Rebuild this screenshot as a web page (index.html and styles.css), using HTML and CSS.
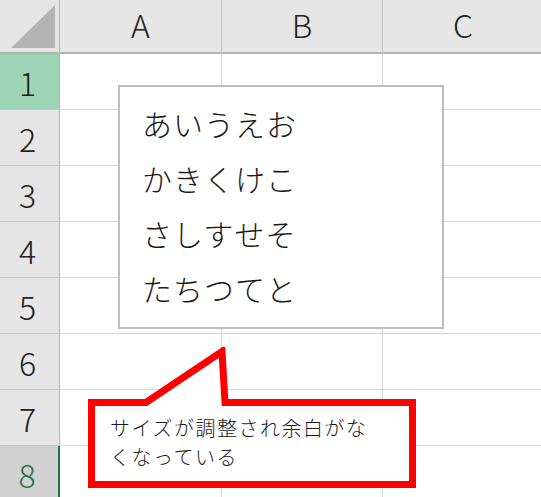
FILE: index.html
```html
<!DOCTYPE html>
<html lang="ja">
<head>
<meta charset="utf-8">
<title>Sheet</title>
<link rel="stylesheet" href="styles.css">
</head>
<body>
<div class="sheet">
  <div class="grid">
    <div class="corner"><svg class="corner-tri" width="44" height="43" viewBox="0 0 44 43"><polygon points="44,0 44,43 0,43" fill="#b4b4b4"/></svg></div>
    <div class="colhead">A</div>
    <div class="colhead">B</div>
    <div class="colhead">C</div>

    <div class="rowhead sel">1</div><div class="cell"></div><div class="cell"></div><div class="cell"></div>
    <div class="rowhead">2</div><div class="cell"></div><div class="cell"></div><div class="cell"></div>
    <div class="rowhead">3</div><div class="cell"></div><div class="cell"></div><div class="cell"></div>
    <div class="rowhead">4</div><div class="cell"></div><div class="cell"></div><div class="cell"></div>
    <div class="rowhead">5</div><div class="cell"></div><div class="cell"></div><div class="cell"></div>
    <div class="rowhead">6</div><div class="cell"></div><div class="cell"></div><div class="cell"></div>
    <div class="rowhead">7</div><div class="cell"></div><div class="cell"></div><div class="cell"></div>
    <div class="rowhead active">8</div><div class="cell"></div><div class="cell"></div><div class="cell"></div>
  </div>

  <div class="textbox">
    <div class="tb-line">あいうえお</div>
    <div class="tb-line">かきくけこ</div>
    <div class="tb-line">さしすせそ</div>
    <div class="tb-line">たちつてと</div>
  </div>

  <div class="callout">
    <svg class="callout-shape" width="328" height="141" viewBox="0 0 328 141">
      <path d="M3.5,55.5 H58 L134,4.5 L137,55.5 H324.5 V137.5 H3.5 Z" fill="#ffffff" stroke="#ff0000" stroke-width="7" stroke-linejoin="miter" stroke-miterlimit="10"/>
    </svg>
    <div class="callout-text">サイズが調整され余白がな<br>くなっている</div>
  </div>
</div>
</body>
</html>
```

FILE: styles.css
```css
html, body {
  margin: 0;
  padding: 0;
  background: #ffffff;
  overflow: hidden;
}

.sheet {
  position: relative;
  width: 541px;
  height: 497px;
  overflow: hidden;
  font-family: "Noto Sans CJK JP", "Noto Sans", sans-serif;
}

.grid {
  display: grid;
  grid-template-columns: 60px 162px 161px 161px;
  grid-template-rows: 54px repeat(8, 56px);
}

.corner {
  background: #e6e6e6;
  border-right: 1px solid #b3b3b3;
  border-bottom: 2px solid #b3b3b3;
  box-sizing: border-box;
  display: flex;
  align-items: flex-end;
  justify-content: flex-end;
  padding: 0 4px 4px 0;
}

.corner-tri {
  display: block;
}

.colhead {
  background: #e6e6e6;
  border-right: 1px solid #c6c6c6;
  border-bottom: 2px solid #b3b3b3;
  box-sizing: border-box;
  display: flex;
  align-items: center;
  justify-content: center;
  font-size: 32px;
  font-weight: 300;
  color: #222222;
  padding-bottom: 4px;
}

.rowhead {
  background: #e6e6e6;
  border-right: 1px solid #b3b3b3;
  border-bottom: 1px solid #c6c6c6;
  box-sizing: border-box;
  display: flex;
  align-items: center;
  justify-content: center;
  font-size: 32px;
  font-weight: 300;
  color: #222222;
  padding-right: 4px;
}

.rowhead.sel {
  background: #9fd5b7;
}

.rowhead.active {
  background: #d2d2d2;
  color: #217346;
  border-right: 2px solid #217346;
}

.cell {
  border-right: 1px solid #d9d9d9;
  border-bottom: 1px solid #d9d9d9;
  box-sizing: border-box;
}

.textbox {
  position: absolute;
  left: 118px;
  top: 85px;
  width: 326px;
  height: 244px;
  box-sizing: border-box;
  background: #ffffff;
  border: 2px solid #bdbdbd;
  padding: 9px 0 0 22px;
  font-size: 30px;
  font-weight: 300;
  color: #1a1a1a;
}

.tb-line {
  height: 55px;
  line-height: 55px;
  letter-spacing: 1px;
  white-space: nowrap;
}

.callout {
  position: absolute;
  left: 88px;
  top: 347px;
  width: 328px;
  height: 141px;
}

.callout-shape {
  position: absolute;
  left: 0;
  top: 0;
}

.callout-text {
  position: absolute;
  left: 22px;
  top: 66px;
  font-size: 20px;
  font-weight: 300;
  line-height: 29px;
  letter-spacing: 1.5px;
  color: #1a1a1a;
  white-space: nowrap;
}
```
